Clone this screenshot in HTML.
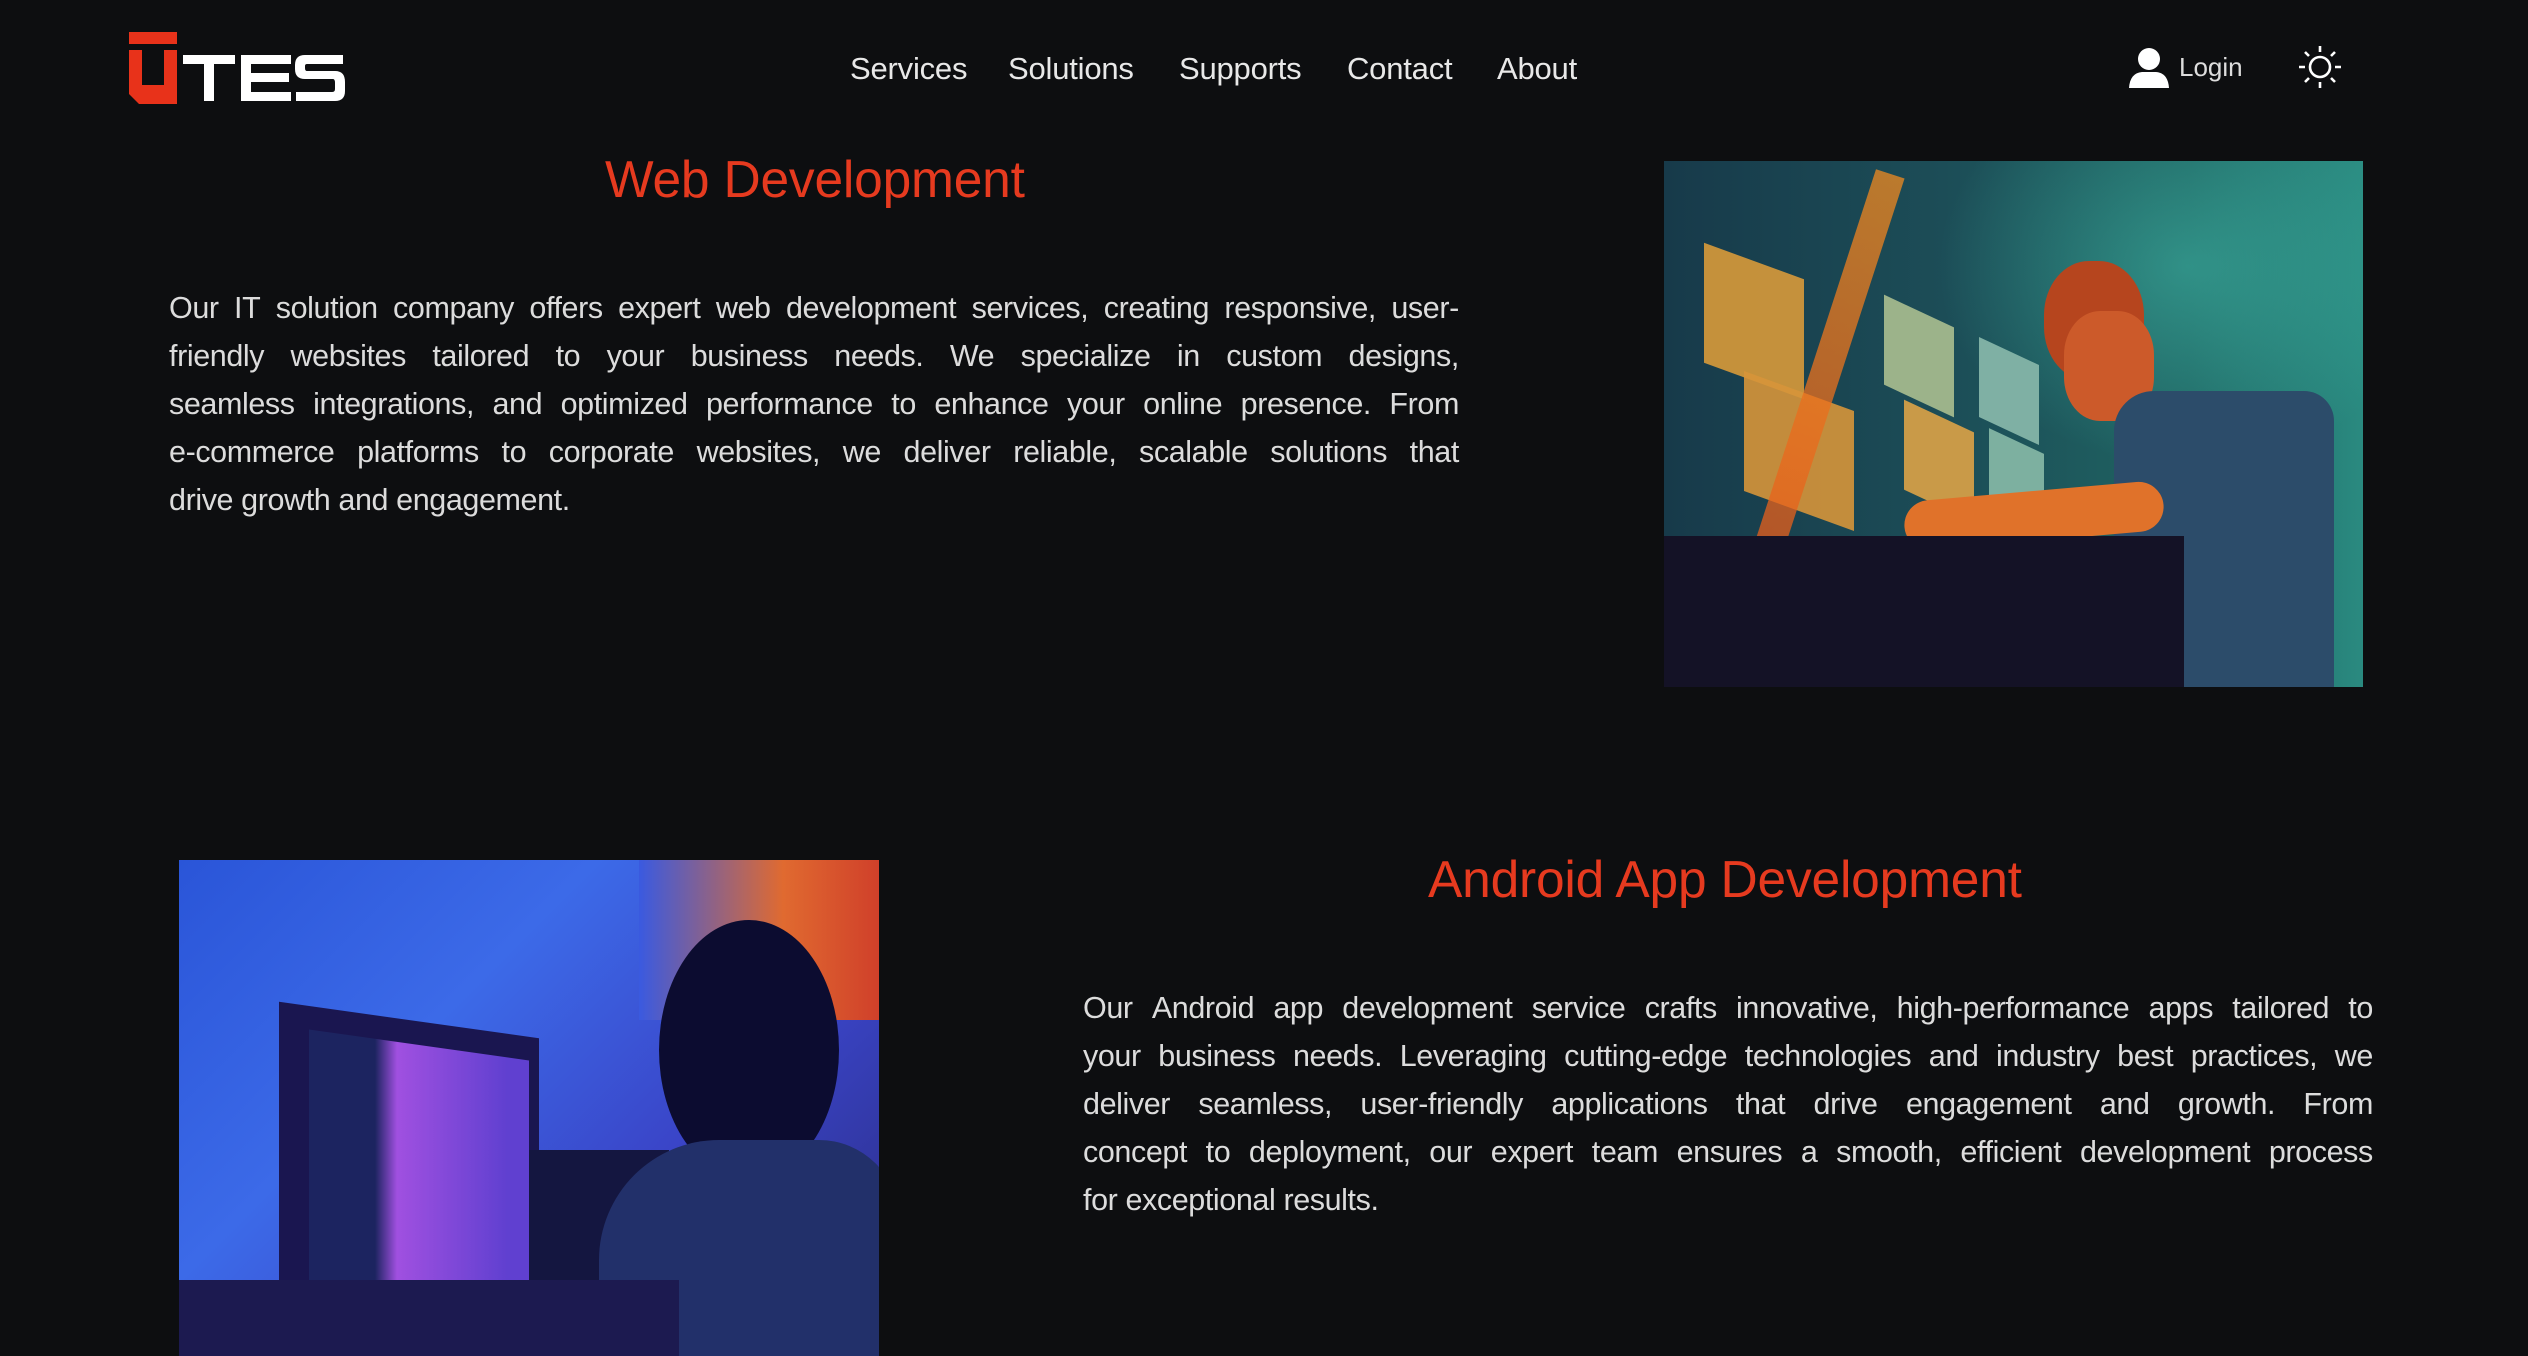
<!DOCTYPE html>
<html><head><meta charset="utf-8"><style>
*{margin:0;padding:0;box-sizing:border-box}
html,body{width:2528px;height:1356px;overflow:hidden;background:#0d0e10;font-family:"Liberation Sans",sans-serif;color:#e2e2e2}
.abs{position:absolute}
nav a{position:absolute;top:51px;font-size:31px;color:#e8e8e8;letter-spacing:-0.2px}
h2{position:absolute;font-weight:normal;color:#e63a1f;font-size:51.5px;letter-spacing:-0.2px;white-space:nowrap}
.txt{position:absolute;width:1290px;font-size:30.5px;line-height:48px;color:#dcdcdc;letter-spacing:-0.4px}
.txt div{white-space:nowrap;display:flex;justify-content:space-between}
.txt div.l{display:block}
</style></head><body>
<div class="abs" style="left:129px;top:32px;width:48px;height:12px;background:#e8321a"></div>
<svg class="abs" style="left:129px;top:50px" width="50" height="55"><path d="M0 0H13V35H35V0H48V54H10L0 44Z" fill="#e8321a"/></svg>
<svg class="abs" style="left:183px;top:52px" width="165" height="52"><g fill="#fff">
<rect x="0" y="3" width="52" height="9"/><rect x="21" y="3" width="10" height="46"/>
<path d="M58 3H108V12H68V21H106V30H68V40H108V49H58Z"/>
<path d="M160 3H122Q112 3 112 13V17Q112 27 122 27H150Q152 27 152 31V37Q152 40 149 40H113V49H152Q162 49 162 39V30Q162 19 152 19H124Q122 19 122 16V14Q122 12 124 12H160Z"/></g></svg>
<nav>
<a style="left:850px">Services</a><a style="left:1008px">Solutions</a><a style="left:1179px">Supports</a><a style="left:1347px">Contact</a><a style="left:1497px">About</a>
</nav>
<svg class="abs" style="left:2128px;top:48px" width="42" height="40"><circle cx="21" cy="11" r="11" fill="#fff"/><path d="M1 40Q2 25 14 24H28Q40 25 41 40Z" fill="#fff"/></svg>
<div class="abs" style="left:2179px;top:52px;font-size:26px;color:#ddd">Login</div>
<svg class="abs" style="left:2298px;top:45px" width="44" height="44" stroke="#fff" stroke-width="2.6" fill="none"><circle cx="22" cy="22" r="10"/><path d="M22 1V7M22 37V43M1 22H7M37 22H43M7 7L11 11M33 33L37 37M37 7L33 11M7 37L11 33"/></svg>

<h2 style="left:605px;top:149px">Web Development</h2>
<div class="txt" style="left:169px;top:284px">
<div><span>Our</span><span>IT</span><span>solution</span><span>company</span><span>offers</span><span>expert</span><span>web</span><span>development</span><span>services,</span><span>creating</span><span>responsive,</span><span>user-</span></div>
<div><span>friendly</span><span>websites</span><span>tailored</span><span>to</span><span>your</span><span>business</span><span>needs.</span><span>We</span><span>specialize</span><span>in</span><span>custom</span><span>designs,</span></div>
<div><span>seamless</span><span>integrations,</span><span>and</span><span>optimized</span><span>performance</span><span>to</span><span>enhance</span><span>your</span><span>online</span><span>presence.</span><span>From</span></div>
<div><span>e-commerce</span><span>platforms</span><span>to</span><span>corporate</span><span>websites,</span><span>we</span><span>deliver</span><span>reliable,</span><span>scalable</span><span>solutions</span><span>that</span></div>
<div class="l">drive growth and engagement.</div>
</div>

<div class="abs" style="left:1664px;top:161px;width:699px;height:526px;overflow:hidden;background:linear-gradient(90deg,#173a4a 0%,#1c4d57 40%,#1f6462 75%,#2a8a80 100%)">
<div class="abs" style="left:0;top:0;width:699px;height:526px;background:radial-gradient(ellipse 250px 200px at 75% 20%,rgba(70,200,180,.45),transparent)"></div>
<div class="abs" style="left:40px;top:100px;width:100px;height:120px;background:#d89a3a;transform:skewY(20deg);opacity:.9"></div>
<div class="abs" style="left:80px;top:230px;width:110px;height:120px;background:#d6953a;transform:skewY(20deg);opacity:.9"></div>
<div class="abs" style="left:220px;top:150px;width:70px;height:90px;background:#9cb38a;transform:skewY(25deg)"></div>
<div class="abs" style="left:240px;top:255px;width:70px;height:90px;background:#c99a48;transform:skewY(25deg)"></div>
<div class="abs" style="left:315px;top:190px;width:60px;height:80px;background:#7fb0a4;transform:skewY(25deg)"></div>
<div class="abs" style="left:325px;top:280px;width:55px;height:75px;background:#7db0a0;transform:skewY(25deg)"></div>
<div class="abs" style="left:130px;top:0;width:30px;height:526px;background:linear-gradient(#f08a20,#e44d18);transform:rotate(18deg);opacity:.75"></div>
<div class="abs" style="left:380px;top:100px;width:100px;height:120px;border-radius:45%;background:#b6451e"></div>
<div class="abs" style="left:400px;top:150px;width:90px;height:110px;border-radius:40%;background:#cc5a2a"></div>
<div class="abs" style="left:450px;top:230px;width:220px;height:296px;background:#2c4c6a;border-radius:40px 30px 0 0"></div>
<div class="abs" style="left:240px;top:330px;width:260px;height:50px;background:#e0722a;border-radius:25px;transform:rotate(-5deg)"></div>
<div class="abs" style="left:0;top:375px;width:520px;height:151px;background:#141226"></div>
</div>

<div class="abs" style="left:179px;top:860px;width:700px;height:496px;overflow:hidden;background:linear-gradient(135deg,#2a55d8 0%,#3c6ae8 35%,#3a45c8 65%,#2a2a80 100%)">
<div class="abs" style="left:460px;top:0;width:240px;height:160px;background:linear-gradient(90deg,#3a5ae0,#e06a30 60%,#d0402a)"></div>
<div class="abs" style="left:100px;top:160px;width:260px;height:330px;background:#1a1650;transform:skewY(8deg)"></div>
<div class="abs" style="left:130px;top:185px;width:220px;height:270px;background:linear-gradient(90deg,#1c2460 30%,#a050e0 40%,#6040d0 90%);transform:skewY(8deg)"></div>
<div class="abs" style="left:350px;top:290px;width:140px;height:260px;background:#141640"></div>
<div class="abs" style="left:480px;top:60px;width:180px;height:260px;background:#0c0c30;border-radius:50%"></div>
<div class="abs" style="left:420px;top:280px;width:300px;height:260px;background:#22306a;border-radius:120px 80px 0 0"></div>
<div class="abs" style="left:0;top:420px;width:500px;height:80px;background:#1c1a50"></div>
</div>

<h2 style="left:1428px;top:849px">Android App Development</h2>
<div class="txt" style="left:1083px;top:984px">
<div><span>Our</span><span>Android</span><span>app</span><span>development</span><span>service</span><span>crafts</span><span>innovative,</span><span>high-performance</span><span>apps</span><span>tailored</span><span>to</span></div>
<div><span>your</span><span>business</span><span>needs.</span><span>Leveraging</span><span>cutting-edge</span><span>technologies</span><span>and</span><span>industry</span><span>best</span><span>practices,</span><span>we</span></div>
<div><span>deliver</span><span>seamless,</span><span>user-friendly</span><span>applications</span><span>that</span><span>drive</span><span>engagement</span><span>and</span><span>growth.</span><span>From</span></div>
<div><span>concept</span><span>to</span><span>deployment,</span><span>our</span><span>expert</span><span>team</span><span>ensures</span><span>a</span><span>smooth,</span><span>efficient</span><span>development</span><span>process</span></div>
<div class="l">for exceptional results.</div>
</div>
</body></html>
